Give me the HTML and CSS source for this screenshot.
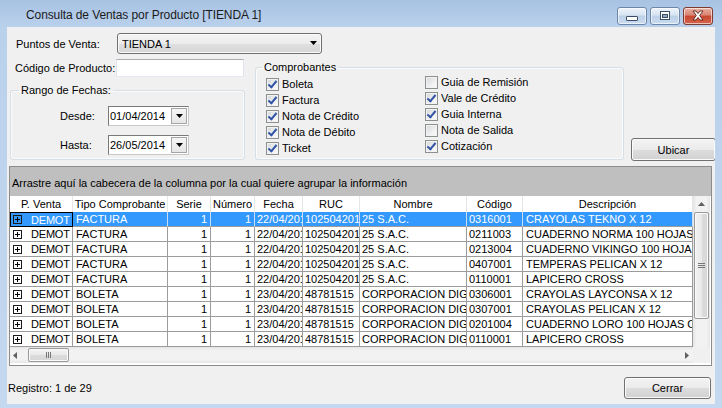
FILE: index.html
```html
<!DOCTYPE html>
<html lang="es">
<head>
<meta charset="utf-8">
<title>Consulta de Ventas por Producto</title>
<link rel="stylesheet" href="styles.css">
</head>
<body>
<div class="window">
  <div class="titlebar">
    <span class="title">Consulta de Ventas por Producto [TIENDA 1]</span>
    <div class="caption-buttons">
      <span class="cbtn"><svg width="28" height="16" viewBox="0 0 28 16"><rect x="8.5" y="8.5" width="11" height="4" rx="0.5" fill="#fff" stroke="#3d4f66"/></svg></span>
      <span class="cbtn"><svg width="28" height="16" viewBox="0 0 28 16"><rect x="9.5" y="3.5" width="9" height="8" fill="#fff" stroke="#3d4f66"/><rect x="11.5" y="6.5" width="5" height="3" fill="#8fa7c4" stroke="#3d4f66"/></svg></span>
      <span class="cbtn close"><svg width="28" height="16" viewBox="0 0 28 16"><path d="M9 3 L12 3 L14 5.5 L16 3 L19 3 L15.7 7.5 L19 12 L16 12 L14 9.5 L12 12 L9 12 L12.3 7.5 Z" fill="#fff" stroke="#5a2119" stroke-width="0.9" stroke-linejoin="round"/></svg></span>
    </div>
  </div>

  <div class="client">
    <div class="top">
      <div class="row-pv">
        <span class="pv-lbl">Puntos de Venta:</span>
        <div class="combo"><span>TIENDA 1</span><svg width="8" height="5" viewBox="0 0 8 5"><path d="M0 0 H7 L3.5 4 Z" fill="#000"/></svg></div>
      </div>

      <div class="row-main">
        <div class="left-col">
          <div class="row-cod">
            <span class="cod-lbl">Código de Producto:</span>
            <div class="textbox"></div>
          </div>
          <fieldset class="group rango">
            <legend>Rango de Fechas:</legend>
            <div class="date-row">
              <span class="date-lbl">Desde:</span>
              <div class="datebox"><span class="dt">01/04/2014</span><span class="dd"><svg width="7" height="4" viewBox="0 0 7 4"><path d="M0 0 H7 L3.5 4 Z" fill="#000"/></svg></span></div>
            </div>
            <div class="date-row">
              <span class="date-lbl">Hasta:</span>
              <div class="datebox"><span class="dt">26/05/2014</span><span class="dd"><svg width="7" height="4" viewBox="0 0 7 4"><path d="M0 0 H7 L3.5 4 Z" fill="#000"/></svg></span></div>
            </div>
          </fieldset>
        </div>

        <fieldset class="group comp">
          <legend>Comprobantes</legend>
          <div class="chk-cols">
            <div class="chk-col col1">
              <div class="chk"><span class="cb on"></span>Boleta</div>
              <div class="chk"><span class="cb on"></span>Factura</div>
              <div class="chk"><span class="cb on"></span>Nota de Crédito</div>
              <div class="chk"><span class="cb on"></span>Nota de Débito</div>
              <div class="chk"><span class="cb on"></span>Ticket</div>
            </div>
            <div class="chk-col col2">
              <div class="chk"><span class="cb"></span>Guia de Remisión</div>
              <div class="chk"><span class="cb on"></span>Vale de Crédito</div>
              <div class="chk"><span class="cb on"></span>Guia Interna</div>
              <div class="chk"><span class="cb"></span>Nota de Salida</div>
              <div class="chk"><span class="cb on"></span>Cotización</div>
            </div>
          </div>
        </fieldset>

        <div class="btn ubicar">Ubicar</div>
      </div>
    </div>

    <div class="grid">
      <div class="grouppanel">Arrastre aquí la cabecera de la columna por la cual quiere agrupar la información</div>
      <div class="gbody">
        <div class="table">
          <div class="hdr">
            <span>P. Venta</span><span>Tipo Comprobante</span><span>Serie</span><span>Número</span><span>Fecha</span><span>RUC</span><span>Nombre</span><span>Código</span><span>Descripción</span>
          </div>
          <div class="row sel">
            <span class="c-pv focus"><i class="exp"></i>DEMOT</span><span class="c-tipo">FACTURA</span><span class="num">1</span><span class="num">1</span><span>22/04/2014</span><span>10250420171</span><span>25 S.A.C.</span><span>0316001</span><span class="c-desc">CRAYOLAS TEKNO X 12</span>
          </div>
          <div class="row">
            <span class="c-pv"><i class="exp"></i>DEMOT</span><span class="c-tipo">FACTURA</span><span class="num">1</span><span class="num">1</span><span>22/04/2014</span><span>10250420171</span><span>25 S.A.C.</span><span>0211003</span><span class="c-desc">CUADERNO NORMA 100 HOJAS C</span>
          </div>
          <div class="row">
            <span class="c-pv"><i class="exp"></i>DEMOT</span><span class="c-tipo">FACTURA</span><span class="num">1</span><span class="num">1</span><span>22/04/2014</span><span>10250420171</span><span>25 S.A.C.</span><span>0213004</span><span class="c-desc">CUADERNO VIKINGO 100 HOJAS</span>
          </div>
          <div class="row">
            <span class="c-pv"><i class="exp"></i>DEMOT</span><span class="c-tipo">FACTURA</span><span class="num">1</span><span class="num">1</span><span>22/04/2014</span><span>10250420171</span><span>25 S.A.C.</span><span>0407001</span><span class="c-desc">TEMPERAS PELICAN X 12</span>
          </div>
          <div class="row">
            <span class="c-pv"><i class="exp"></i>DEMOT</span><span class="c-tipo">FACTURA</span><span class="num">1</span><span class="num">1</span><span>22/04/2014</span><span>10250420171</span><span>25 S.A.C.</span><span>0110001</span><span class="c-desc">LAPICERO CROSS</span>
          </div>
          <div class="row">
            <span class="c-pv"><i class="exp"></i>DEMOT</span><span class="c-tipo">BOLETA</span><span class="num">1</span><span class="num">1</span><span>23/04/2014</span><span>48781515</span><span>CORPORACION DIGITAL</span><span>0306001</span><span class="c-desc">CRAYOLAS LAYCONSA X 12</span>
          </div>
          <div class="row">
            <span class="c-pv"><i class="exp"></i>DEMOT</span><span class="c-tipo">BOLETA</span><span class="num">1</span><span class="num">1</span><span>23/04/2014</span><span>48781515</span><span>CORPORACION DIGITAL</span><span>0307001</span><span class="c-desc">CRAYOLAS PELICAN X 12</span>
          </div>
          <div class="row">
            <span class="c-pv"><i class="exp"></i>DEMOT</span><span class="c-tipo">BOLETA</span><span class="num">1</span><span class="num">1</span><span>23/04/2014</span><span>48781515</span><span>CORPORACION DIGITAL</span><span>0201004</span><span class="c-desc">CUADERNO LORO 100 HOJAS C</span>
          </div>
          <div class="row">
            <span class="c-pv"><i class="exp"></i>DEMOT</span><span class="c-tipo">BOLETA</span><span class="num">1</span><span class="num">1</span><span>23/04/2014</span><span>48781515</span><span>CORPORACION DIGITAL</span><span>0110001</span><span class="c-desc">LAPICERO CROSS</span>
          </div>
        </div>
        <div class="vscroll">
          <svg class="arr-up" width="7" height="4" viewBox="0 0 7 4"><path d="M3.5 0 L7 4 H0 Z" fill="#606060"/></svg>
          <div class="vthumb"><span></span><span></span><span></span></div>
        </div>
      </div>
      <div class="hrow">
        <div class="hscroll">
          <svg class="arr-l" width="4" height="7" viewBox="0 0 4 7"><path d="M0 3.5 L4 0 V7 Z" fill="#606060"/></svg>
          <div class="hthumb"><span></span><span></span><span></span></div>
          <svg class="arr-r" width="4" height="7" viewBox="0 0 4 7"><path d="M4 3.5 L0 0 V7 Z" fill="#606060"/></svg>
        </div>
        <div class="corner"></div>
      </div>
    </div>

    <div class="footer">
      <span class="registro">Registro: 1 de 29</span>
      <div class="btn cerrar">Cerrar</div>
    </div>
  </div>
</div>
</body>
</html>
```

FILE: styles.css
```css
* { box-sizing: border-box; }
html, body { margin: 0; padding: 0; }
body {
  width: 722px;
  height: 408px;
  overflow: hidden;
  background: #c3d7ef;
  font-family: "Liberation Sans", Arial, sans-serif;
  font-size: 11px;
  color: #000;
}
.window {
  width: 722px;
  height: 408px;
  display: flex;
  flex-direction: column;
  background: linear-gradient(#a7c2e3 0, #bad1ec 27px, #c4d8ef 100%);
}

/* title bar */
.titlebar {
  height: 27px;
  flex: none;
  display: flex;
  align-items: flex-start;
  padding-left: 26px;
}
.title {
  flex: 1;
  font-size: 12px;
  color: #1b1b1b;
  margin-top: 8px;
  letter-spacing: -0.1px;
}
.caption-buttons {
  display: flex;
  gap: 3px;
  margin-top: 7px;
  margin-right: 9px;
}
.cbtn {
  width: 30px;
  height: 18px;
  border: 1px solid #6e87a9;
  border-radius: 3px;
  background: linear-gradient(#eef4fa, #d6e3f1 45%, #bcd0e7 50%, #cadcef);
  box-shadow: inset 0 0 0 1px rgba(255,255,255,0.6);
  display: flex;
  align-items: center;
  justify-content: center;
}
.cbtn.close {
  border-color: #7c3a30;
  background: linear-gradient(#eab0a3, #d98371 45%, #c7462f 50%, #d4654c);
}
.cbtn svg { display: block; }

/* client area */
.client {
  margin-left: 7px;
  width: 708px;
  height: 377px;
  flex: none;
  background: #f0f0f0;
  overflow: hidden;
  display: flex;
  flex-direction: column;
}
.top { height: 139px; flex: none; }

.row-pv {
  display: flex;
  align-items: center;
  margin-top: 6px;
  height: 21px;
}
.pv-lbl { margin-left: 9px; width: 101px; }
.combo {
  width: 205px;
  height: 21px;
  border: 1px solid #707070;
  border-radius: 3px;
  background: linear-gradient(#f4f4f4, #ececec 50%, #e0e0e0 51%, #d6d6d6);
  box-shadow: inset 0 0 0 1px #fbfbfb;
  display: flex;
  align-items: center;
  justify-content: space-between;
  padding: 0 3px 0 4px;
}
.combo svg { display: block; }

.row-main {
  display: flex;
  align-items: flex-start;
  margin-top: 5px;
}
.left-col { margin-left: 3px; width: 235px; flex: none; }
.row-cod { display: flex; align-items: center; height: 18px; }
.cod-lbl { margin-left: 5px; width: 101px; }
.textbox {
  width: 128px;
  height: 18px;
  background: #fff;
  border: 1px solid #e2e3ea;
  border-top-color: #abadb3;
  border-bottom-color: #e3e9ef;
}

fieldset.group {
  margin: 0;
  padding: 0;
  border: 1px solid #d5dfe5;
  border-radius: 3px;
  box-shadow: inset 0 0 0 1px #fbfbfb;
  min-width: 0;
  flex: none;
}
fieldset.group legend {
  margin-left: 8px;
  padding: 0 2px;
  line-height: 13px;
}
fieldset.rango {
  width: 235px;
  height: 76px;
  margin-top: 7px;
}
.date-row { display: flex; align-items: center; height: 20px; margin-top: 9px; }
.date-lbl { margin-left: 49px; width: 48px; }
.datebox {
  width: 81px;
  height: 20px;
  background: #fff;
  border: 1px solid #7a7a7a;
  border-right-color: #c8c8c8;
  border-bottom-color: #c8c8c8;
  display: flex;
  align-items: center;
  padding-left: 1px;
}
.dt { flex: 1; }
.dd {
  width: 16px;
  height: 16px;
  margin-right: 1px;
  border: 1px solid #a5a5a5;
  background: linear-gradient(#f6f6f6, #e6e6e6);
  display: flex;
  align-items: center;
  justify-content: center;
}
.dd svg { display: block; }

fieldset.comp {
  width: 369px;
  height: 99px;
  margin-left: 10px;
  margin-top: 2px;
}
fieldset.comp legend { margin-left: 6px; }
.chk-cols { display: flex; padding-left: 10px; }
.chk-col { display: flex; flex-direction: column; }
.col1 { width: 159px; margin-top: 2px; }
.col2 { margin-top: 0; }
.chk { display: flex; align-items: center; height: 16px; white-space: nowrap; }
.cb {
  width: 13px;
  height: 13px;
  margin-right: 3px;
  flex: none;
  border: 1px solid #8e8f8f;
  background: linear-gradient(135deg, #d3d7dc, #f4f4f4 70%, #fdfdfd);
  box-shadow: inset 0 0 0 1px #f2f2f2;
  position: relative;
}
.cb.on::after {
  content: "";
  position: absolute;
  left: 3px;
  top: 0px;
  width: 3px;
  height: 7px;
  border: solid #3355a6;
  border-width: 0 2px 2px 0;
  transform: rotate(40deg);
}

.btn {
  border: 1px solid #707070;
  border-radius: 3px;
  background: linear-gradient(#f3f3f3, #ebebeb 50%, #dddddd 51%, #d1d1d1);
  box-shadow: inset 0 0 0 1px #fbfbfb;
  display: flex;
  align-items: center;
  justify-content: center;
  flex: none;
}
.ubicar {
  width: 85px;
  height: 23px;
  margin-left: 7px;
  margin-top: 79px;
}

/* grid */
.grid {
  margin-left: 2px;
  width: 703px;
  height: 200px;
  flex: none;
  border: 1px solid #8c8c8c;
  background: #fff;
  display: flex;
  flex-direction: column;
  overflow: hidden;
}
.grouppanel {
  height: 29px;
  flex: none;
  background: #bfbfbf;
  padding: 3px 0 0 2px;
  line-height: 26px;
  white-space: nowrap;
}
.gbody { display: flex; height: 151px; flex: none; }
.table { width: 683px; flex: none; overflow: hidden; }
.hdr, .row {
  display: grid;
  grid-template-columns: 63px 95px 43px 44px 48px 57px 107px 56px 170px;
}
.hdr { height: 16px; background: #fff; }
.hdr span {
  text-align: center;
  line-height: 16px;
  border-right: 1px solid #e6e6e6;
  white-space: nowrap;
  overflow: hidden;
}
.row { height: 15px; }
.row span {
  border-right: 1px solid #9c9c9c;
  border-bottom: 1px solid #9c9c9c;
  line-height: 14px;
  padding: 0 2px;
  white-space: nowrap;
  overflow: hidden;
}
.row span.num { text-align: right; padding-right: 3px; }
.row span.c-tipo { padding-left: 3px; }
.row span.c-desc { padding-left: 3px; }
.row span.c-pv { padding-left: 3px; display: flex; align-items: center; letter-spacing: -0.2px; }
.exp {
  width: 9px;
  height: 9px;
  border: 1px solid #1a1a1a;
  margin-right: 9px;
  flex: none;
  position: relative;
}
.exp::before {
  content: "";
  position: absolute;
  left: 1px; top: 3px;
  width: 5px; height: 1px;
  background: #000;
}
.exp::after {
  content: "";
  position: absolute;
  left: 3px; top: 1px;
  width: 1px; height: 5px;
  background: #000;
}
.row.sel span {
  background: #3399ff;
  color: #fff;
  border-right-color: #c9def5;
}
.row.sel span.focus { border: 1px solid #000; padding-left: 2px; }

.vscroll {
  width: 17px;
  flex: none;
  background: linear-gradient(90deg, #e4e4e4, #f2f2f2 20%, #f2f2f2 80%, #e6e6e6);
  display: flex;
  flex-direction: column;
  align-items: center;
}
.arr-up { margin-top: 6px; display: block; }
.vthumb {
  margin-top: 6px;
  width: 15px;
  height: 107px;
  border: 1px solid #9a9a9a;
  border-radius: 2px;
  background: linear-gradient(90deg, #f3f3f3, #e9e9e9 50%, #dcdcdc 51%, #d6d6d6);
  box-shadow: inset 0 0 0 1px #fafafa;
  display: flex;
  flex-direction: column;
  align-items: center;
  justify-content: center;
  gap: 1px;
}
.vthumb span { width: 7px; height: 1px; background: #777; }

.hrow { display: flex; height: 16px; flex: none; }
.hscroll {
  width: 683px;
  flex: none;
  background: linear-gradient(#e4e4e4, #f2f2f2 20%, #f2f2f2 80%, #e6e6e6);
  display: flex;
  align-items: center;
  padding-left: 3px;
}
.arr-l, .arr-r { display: block; flex: none; }
.hthumb {
  margin-left: 11px;
  width: 41px;
  height: 14px;
  border: 1px solid #9a9a9a;
  border-radius: 2px;
  background: linear-gradient(#f3f3f3, #e9e9e9 50%, #dcdcdc 51%, #d6d6d6);
  box-shadow: inset 0 0 0 1px #fafafa;
  display: flex;
  align-items: center;
  justify-content: center;
  gap: 1px;
}
.hthumb span { width: 1px; height: 6px; background: #777; }
.arr-r { margin-left: auto; margin-right: 4px; }
.corner { width: 17px; flex: none; background: #f0f0f0; }

/* footer */
.footer {
  display: flex;
  align-items: center;
  justify-content: space-between;
  padding: 11px 4px 0 1px;
}
.cerrar { width: 87px; height: 22px; }
```
